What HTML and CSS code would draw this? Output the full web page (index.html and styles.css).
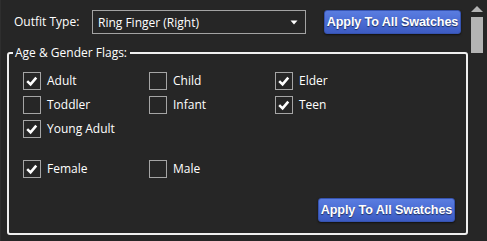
FILE: index.html
```
<!DOCTYPE html>
<html>
<head>
<meta charset="utf-8">
<link rel="stylesheet" href="styles.css">
</head>
<body>
<div class="window">
  <div class="main">
    <div class="top-row">
      <span class="field-label">Outfit Type:</span>
      <div class="select">
        <span class="select-text">Ring Finger (Right)</span>
        <svg class="select-arrow" width="8" height="5" viewBox="0 0 8 5"><path d="M0.5 0.5 L7.5 0.5 L4 4.5 Z" fill="#fff"/></svg>
      </div>
      <button class="apply-btn">Apply To All Swatches</button>
    </div>
    <fieldset class="group">
      <legend class="group-legend">Age &amp; Gender Flags:</legend>
      <div class="flags">
        <label class="check"><span class="box on"><svg viewBox="0 0 18 18" width="16" height="16"><path d="M3.6 9.2 L7.4 12.8 L13.8 5.2" fill="none" stroke="#fff" stroke-width="2.9" stroke-linejoin="miter"/></svg></span><span class="check-text">Adult</span></label>
        <label class="check"><span class="box"></span><span class="check-text">Child</span></label>
        <label class="check"><span class="box on"><svg viewBox="0 0 18 18" width="16" height="16"><path d="M3.6 9.2 L7.4 12.8 L13.8 5.2" fill="none" stroke="#fff" stroke-width="2.9" stroke-linejoin="miter"/></svg></span><span class="check-text">Elder</span></label>
        <label class="check"><span class="box"></span><span class="check-text">Toddler</span></label>
        <label class="check"><span class="box"></span><span class="check-text">Infant</span></label>
        <label class="check"><span class="box on"><svg viewBox="0 0 18 18" width="16" height="16"><path d="M3.6 9.2 L7.4 12.8 L13.8 5.2" fill="none" stroke="#fff" stroke-width="2.9" stroke-linejoin="miter"/></svg></span><span class="check-text">Teen</span></label>
        <label class="check"><span class="box on"><svg viewBox="0 0 18 18" width="16" height="16"><path d="M3.6 9.2 L7.4 12.8 L13.8 5.2" fill="none" stroke="#fff" stroke-width="2.9" stroke-linejoin="miter"/></svg></span><span class="check-text">Young Adult</span></label>
      </div>
      <div class="flags gender">
        <label class="check"><span class="box on"><svg viewBox="0 0 18 18" width="16" height="16"><path d="M3.6 9.2 L7.4 12.8 L13.8 5.2" fill="none" stroke="#fff" stroke-width="2.9" stroke-linejoin="miter"/></svg></span><span class="check-text">Female</span></label>
        <label class="check"><span class="box"></span><span class="check-text">Male</span></label>
      </div>
      <div class="group-footer">
        <button class="apply-btn">Apply To All Swatches</button>
      </div>
    </fieldset>
  </div>
  <div class="scrollbar">
    <svg class="scroll-up" width="12" height="6" viewBox="0 0 12 6"><path d="M6 0 L12 6 L0 6 Z" fill="#b4b4b4"/></svg>
    <div class="scroll-thumb"></div>
  </div>
</div>
</body>
</html>
```
FILE: styles.css
```
html, body {
  margin: 0;
  padding: 0;
  background: #262626;
}
body {
  font-family: "Open Sans", "Noto Sans", "Liberation Sans", sans-serif;
  font-size: 12px;
  color: #fff;
}
.window {
  width: 487px;
  height: 241px;
  display: flex;
  background: #262626;
  box-sizing: border-box;
  border-left: 1px solid #2e2e2e;
  overflow: hidden;
}
.main {
  width: 470px;
  display: flex;
  flex-direction: column;
}
.top-row {
  display: flex;
  align-items: center;
  height: 24px;
  margin-top: 10px;
  padding-left: 13px;
}
.field-label {
  width: 78px;
  line-height: 16px;
}
.select {
  width: 214px;
  height: 24px;
  box-sizing: border-box;
  border: 1px solid #a3a3a3;
  display: flex;
  align-items: center;
  justify-content: space-between;
  padding: 0 7px 0 5px;
}
.select-arrow {
  display: block;
}
.apply-btn {
  margin-left: 18px;
  width: 137px;
  height: 24px;
  box-sizing: border-box;
  border: 1px solid #3653b0;
  border-radius: 3px;
  background: linear-gradient(#5a7de0, #4a6cd4 50%, #3d5cc3);
  color: #fff;
  font-family: "Liberation Sans", Arial, sans-serif;
  font-weight: bold;
  font-size: 12.6px;
  letter-spacing: -0.1px;
  padding: 0;
  text-shadow: 0 1px 1px rgba(0,0,0,0.55);
  box-shadow: 0 1px 2px rgba(0,0,0,0.6);
}
.group {
  margin: 11px 0 0 6px;
  width: 461px;
  box-sizing: border-box;
  border: 2px solid #efefef;
  border-radius: 3px;
  padding: 0 11px 11px 4px;
  min-width: 0;
}
.group-legend {
  padding: 0 3px 0 2px;
  line-height: 16px;
}
.flags {
  display: grid;
  grid-template-columns: 126px 126px 126px;
  grid-auto-rows: 24px;
  margin-left: 10px;
  padding-top: 8px;
}
.flags.gender {
  padding-top: 16px;
}
.check {
  display: flex;
  align-items: center;
}
.box {
  width: 18px;
  height: 18px;
  box-sizing: border-box;
  border: 1px solid #a5a5a5;
  display: flex;
  align-items: center;
  justify-content: center;
  margin-right: 6px;
}
.box svg {
  display: block;
}
.check-text {
  line-height: 16px;
}
.group-footer {
  display: flex;
  justify-content: flex-end;
  margin-top: 17px;
}
.group-footer .apply-btn {
  margin-left: 0;
}
.scrollbar {
  width: 12px;
  padding-top: 6px;
  display: flex;
  flex-direction: column;
}
.scroll-up {
  display: block;
}
.scroll-thumb {
  margin-top: 5px;
  height: 36px;
  background: #b4b4b4;
}
```
